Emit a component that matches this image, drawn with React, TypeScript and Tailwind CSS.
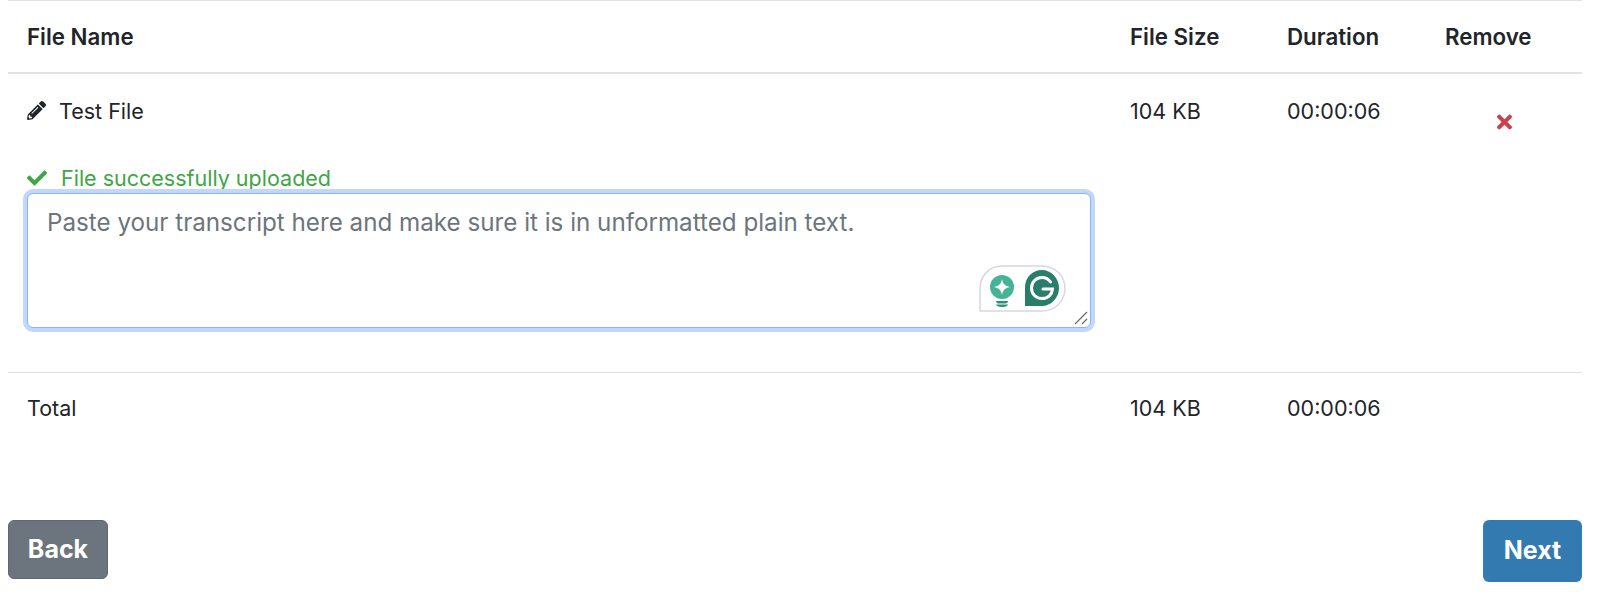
import { FaCheck, FaPencilAlt, FaTimes } from "react-icons/fa";

const GrammarlyBadge = () => {
  return (
    <div className="absolute right-[25px] bottom-[16px] w-[87px] h-[47px]">
      <svg width="87" height="47" viewBox="0 0 87 47" fill="none">
        <path
          d="M1 46V24C1 11 10 1 23 1H63C76 1 86 11 86 23.500C86 36 76 46 63 46Z"
          fill="#ffffff"
          stroke="#d5d8e2"
          strokeWidth="1.500"
        />
        <circle cx="23" cy="22" r="12" fill="#44b396" />
        <path d="M23 14C24 19 26 21 31 22C26 23 24 25 23 30C22 25 20 23 15 22C20 21 22 19 23 14Z" fill="#ffffff" />
        <path d="M17 36H29C29 38 27 38.500 26 38.500H20C19 38.500 17 38 17 36Z" fill="#2f8f76" />
        <path d="M17 39.500H29C28.500 41 27 42 23 42C19 42 17.500 41 17 39.500Z" fill="#2f8f76" />
        <path d="M46 41V22C46 12 54 5 63 5C72 5 80 13 80 23C80 33 72 41 63 41Z" fill="#2b7d6b" />
        <path
          d="M71.500 17C69.500 14 66.500 12.500 63 12.500C57 12.500 52.500 17 52.500 23C52.500 29 57 33.500 63 33.500C69 33.500 73 29.500 73.500 24H64"
          stroke="#ffffff"
          strokeWidth="3"
          strokeLinecap="round"
        />
      </svg>
    </div>
  );
};

const ResizeGrip = () => {
  return (
    <svg className="absolute right-[3px] bottom-[3px]" width="14" height="14" viewBox="0 0 14 14" fill="none">
      <path d="M1 13L13 1M8 13L13 8" stroke="#6b6b6b" strokeWidth="1.200" />
    </svg>
  );
};

const App = () => {
  return (
    <div
      className="w-[1600px] h-[595px] bg-white pl-2 pr-[18px] text-[21.5px] text-[#212529] overflow-hidden"
      style={{ fontFamily: "Inter, 'Liberation Sans', sans-serif" }}
    >
      <table className="w-full table-fixed border-collapse">
        <colgroup>
          <col />
          <col className="w-[157px]" />
          <col className="w-[158px]" />
          <col className="w-[156px]" />
        </colgroup>
        <thead>
          <tr className="border-t border-t-[#dee2e6] border-b-2 border-b-[#dee2e6] h-[72px] text-[22.3px]">
            <th className="pl-[19px] text-left font-semibold">File Name</th>
            <th className="pl-[19px] text-left font-semibold">File Size</th>
            <th className="pl-[19px] text-left font-semibold">Duration</th>
            <th className="pl-[19px] text-left font-semibold">Remove</th>
          </tr>
        </thead>
        <tbody>
          <tr className="border-b border-b-[#dee2e6] align-top leading-[24px]">
            <td className="pl-[19px] pr-[19px] pt-[25px] pb-[44px]">
              <div className="flex items-center gap-[13px] h-[24px]">
                <FaPencilAlt className="w-[19px] h-[19px]" />
                <span>Test File</span>
              </div>
              <div className="flex items-center gap-[14px] mt-[43px] h-[24px] text-[#3fa545]">
                <FaCheck className="w-[20px] h-[20px]" />
                <span>File successfully uploaded</span>
              </div>
              <div className="relative mt-[3px] w-[1064px]">
                <textarea
                  readOnly
                  placeholder="Paste your transcript here and make sure it is in unformatted plain text."
                  className="block w-[1064px] h-[135px] px-[19px] py-[11px] text-[#212529] placeholder:text-[#6c757d] text-[24.2px] leading-[36px] bg-white rounded-[6px] border border-[#86b7fe] shadow-[0_0_0_4px_#c2d7fb] outline-none resize-none"
                />
                <GrammarlyBadge />
                <ResizeGrip />
              </div>
            </td>
            <td className="pl-[19px] pt-[25px]">104 KB</td>
            <td className="pl-[19px] pt-[25px]">00:00:06</td>
            <td className="pl-[19px] pt-[37px]">
              <div className="pl-[52px]">
                <FaTimes className="w-[15px] h-[22px] text-[#cf3f4a]" />
              </div>
            </td>
          </tr>
          <tr className="h-[72px]">
            <td className="pl-[19px]">Total</td>
            <td className="pl-[19px]">104 KB</td>
            <td className="pl-[19px]">00:00:06</td>
            <td />
          </tr>
        </tbody>
      </table>
      <div className="flex justify-between items-start mt-[76px]">
        <button className="w-[100px] h-[59px] rounded-[6px] bg-[#6c757d] border border-[#5f6770] text-white font-bold text-[25px]">
          Back
        </button>
        <button className="w-[99px] h-[62px] rounded-[6px] bg-[#337ab0] text-white font-bold text-[25px]">
          Next
        </button>
      </div>
    </div>
  );
};

export default App;
